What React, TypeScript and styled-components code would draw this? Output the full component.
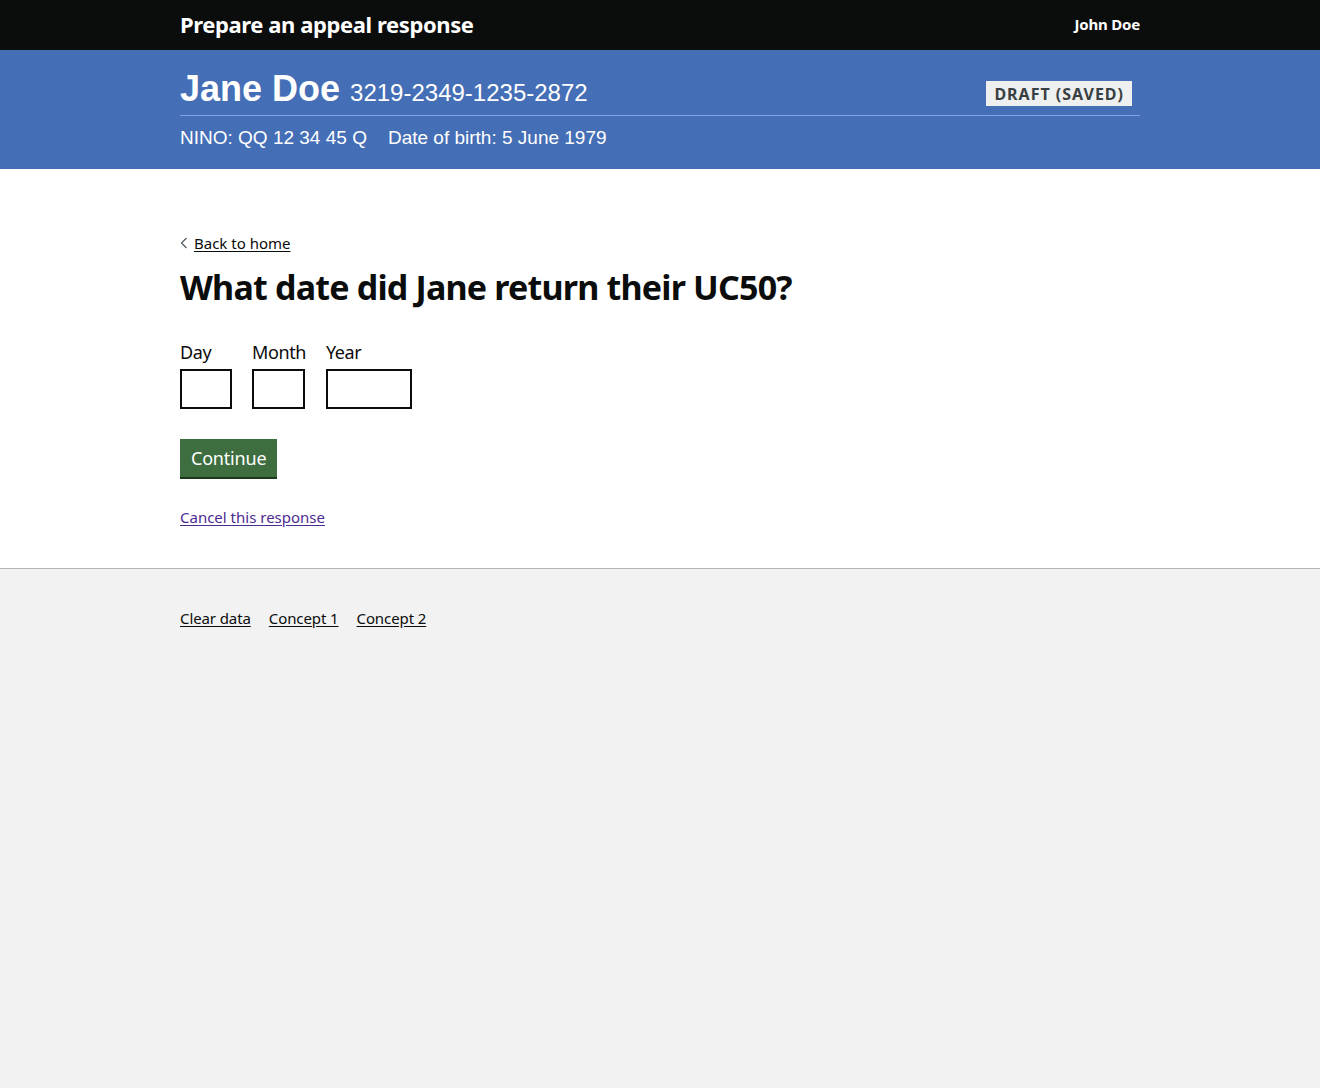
import React from "react";
import styled, { createGlobalStyle } from "styled-components";

const Global = createGlobalStyle`
  html, body { margin: 0; padding: 0; }
  body { font-family: "Noto Sans", Arial, sans-serif; color: #0b0c0c; background: #f3f2f1; }
  #root { min-height: 1088px; display: flex; flex-direction: column; }
`;

const Container = styled.div`
  width: 960px;
  margin: 0 auto;
`;

const TopBar = styled.header`
  background: #0b0c0c;
  height: 50px;
`;

const TopInner = styled(Container)`
  height: 50px;
  display: flex;
  align-items: center;
  justify-content: space-between;
`;

const ServiceName = styled.div`
  color: #fff;
  font-weight: 700;
  font-size: 22px;
  letter-spacing: -0.4px;
  margin-top: -3px;
`;

const UserName = styled.div`
  color: #fff;
  font-weight: 700;
  font-size: 15px;
  letter-spacing: -0.2px;
  margin-top: -2px;
`;

const Band = styled.section`
  background: #446eb5;
  height: 119px;
  font-family: "Liberation Sans", Arial, sans-serif;
  color: #fff;
`;

const BandTop = styled.div`
  display: flex;
  align-items: flex-end;
  justify-content: space-between;
  padding: 21px 0 8px;
  border-bottom: 1px solid #7ea2e4;
`;

const NameRow = styled.div`
  display: flex;
  align-items: baseline;
  gap: 10px;
`;

const Name = styled.h1`
  margin: 0;
  font-size: 36px;
  font-weight: 700;
  line-height: 1;
`;

const CaseNumber = styled.span`
  font-size: 24px;
`;

const Tag = styled.span`
  font-family: "Noto Sans", Arial, sans-serif;
  background: #eeefef;
  color: #383f43;
  font-weight: 700;
  font-size: 16px;
  letter-spacing: 1px;
  padding: 1px 8px 0;
  margin-right: 8px;
  margin-bottom: 1px;
  line-height: 24px;
`;

const Meta = styled.div`
  display: flex;
  gap: 21px;
  font-size: 19px;
  padding-top: 11px;
`;

const Main = styled.main`
  background: #fff;
  padding: 63px 0 40px;
`;

const BackLink = styled.a`
  display: inline-flex;
  align-items: center;
  gap: 6px;
  font-size: 15px;
  color: #0b0c0c;
  text-decoration: underline;
  text-underline-offset: 2px;
`;

const Heading = styled.h2`
  margin: 15px 0 34px;
  font-size: 34px;
  font-weight: 700;
  letter-spacing: -0.8px;
  line-height: 1.1;
`;

const DateRow = styled.div`
  display: flex;
  gap: 20px;
`;

const Field = styled.div`
  display: flex;
  flex-direction: column;
  gap: 5px;
`;

const Label = styled.label`
  font-size: 18px;
  letter-spacing: -0.4px;
  line-height: 24px;
`;

const Input = styled.input<{ $w: number }>`
  box-sizing: border-box;
  width: ${(p) => p.$w}px;
  height: 40px;
  border: 2px solid #0b0c0c;
  border-radius: 0;
  margin: 0;
  background: #fff;
`;

const Button = styled.button`
  margin-top: 30px;
  background: #3e6e3f;
  color: #fff;
  border: 0;
  box-shadow: 0 2px 0 #1b3a1c;
  height: 38px;
  padding: 0 11px;
  font-family: "Noto Sans", Arial, sans-serif;
  font-size: 18px;
  letter-spacing: -0.2px;
  cursor: pointer;
`;

const CancelLink = styled.a`
  display: inline-block;
  margin-top: 30px;
  font-size: 15px;
  color: #4c2c92;
  text-decoration: underline;
  text-underline-offset: 2px;
`;

const Footer = styled.footer`
  flex: 1;
  background: #f2f2f2;
  border-top: 1px solid #b1b4b6;
  padding-top: 39px;
`;

const FooterLinks = styled.div`
  display: flex;
  gap: 18px;
`;

const FooterLink = styled.a`
  font-size: 15px;
  letter-spacing: -0.1px;
  color: #0b0c0c;
  text-decoration: underline;
  text-underline-offset: 2px;
`;

export default function App() {
  return (
    <>
      <Global />
      <TopBar>
        <TopInner>
          <ServiceName>Prepare an appeal response</ServiceName>
          <UserName>John Doe</UserName>
        </TopInner>
      </TopBar>
      <Band>
        <Container>
          <BandTop>
            <NameRow>
              <Name>Jane Doe</Name>
              <CaseNumber>3219-2349-1235-2872</CaseNumber>
            </NameRow>
            <Tag>DRAFT (SAVED)</Tag>
          </BandTop>
          <Meta>
            <span>NINO: QQ 12 34 45 Q</span>
            <span>Date of birth: 5 June 1979</span>
          </Meta>
        </Container>
      </Band>
      <Main>
        <Container>
          <BackLink href="#">
            <svg width="8" height="12" viewBox="0 0 8 12">
              <path d="M6.5 1 L1.5 6 L6.5 11" fill="none" stroke="#505a5f" strokeWidth="1.2" />
            </svg>
            Back to home
          </BackLink>
          <Heading>What date did Jane return their UC50?</Heading>
          <DateRow>
            <Field>
              <Label>Day</Label>
              <Input $w={52} />
            </Field>
            <Field>
              <Label>Month</Label>
              <Input $w={53} />
            </Field>
            <Field>
              <Label>Year</Label>
              <Input $w={86} />
            </Field>
          </DateRow>
          <Button>Continue</Button>
          <div>
            <CancelLink href="#">Cancel this response</CancelLink>
          </div>
        </Container>
      </Main>
      <Footer>
        <Container>
          <FooterLinks>
            <FooterLink href="#">Clear data</FooterLink>
            <FooterLink href="#">Concept 1</FooterLink>
            <FooterLink href="#">Concept 2</FooterLink>
          </FooterLinks>
        </Container>
      </Footer>
    </>
  );
}
